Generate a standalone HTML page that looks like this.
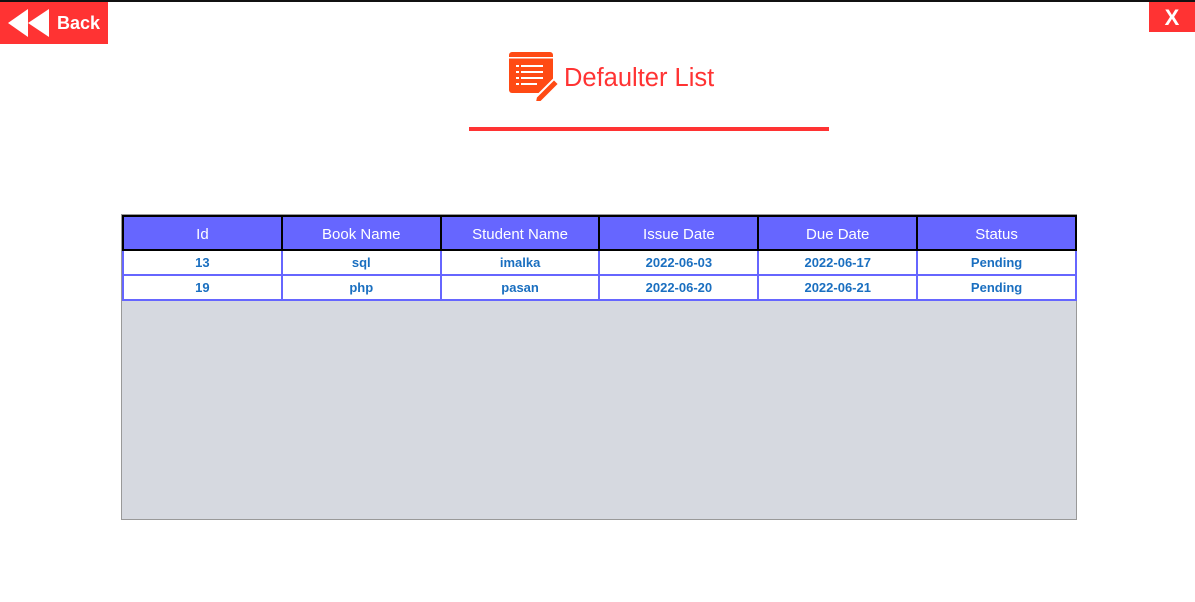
<!DOCTYPE html>
<html><head><style>
body{margin:0;width:1195px;height:602px;background:#fff;position:relative;overflow:hidden;font-family:"Liberation Sans",sans-serif}
.top{position:absolute;left:0;top:0;width:1195px;height:2px;background:#111}
.back{position:absolute;left:0;top:2px;width:108px;height:42px;background:#ff3333;color:#fff;font-weight:bold;font-size:18px}
.back span{position:absolute;left:57px;top:11px}
.x{position:absolute;left:1149px;top:2px;width:46px;height:30px;background:#ff3333;color:#fff;font-weight:bold;font-size:22px;text-align:center;line-height:31px}
.title{position:absolute;left:564px;top:64px;color:#ff3333;font-size:25.5px}
.line{position:absolute;left:469px;top:127px;width:360px;height:4px;background:#ff3333}
.grid{position:absolute;left:121px;top:214px;width:954px;height:304px;background:#d6d9e0;border:1px solid #999}
table{border-collapse:collapse;position:absolute;left:0;top:0;table-layout:fixed;width:955px}
th{background:#6666ff;color:#fff;font-weight:normal;font-size:15px;border:2px solid #000;padding:0;padding-top:2px}
td{background:#fff;color:#1a6fc0;font-weight:bold;font-size:13px;text-align:center;border:2px solid #6666ff;padding:0}
tr.h{height:34px}
tr.r{height:25px}
</style></head><body>
<div class="top"></div>
<div class="back"><svg width="50" height="42" style="position:absolute;left:6px;top:0"><polygon points="2,21 22,7 22,35" fill="#fff"/><polygon points="22,21 43,7 43,35" fill="#fff"/></svg><span>Back</span></div>
<div class="x">X</div>
<svg style="position:absolute;left:508px;top:51px" width="52" height="52">
<rect x="1" y="1" width="44" height="41" rx="3" fill="#ff4a14"/>
<rect x="1" y="6" width="44" height="1.5" fill="#fff"/>
<g fill="#fff"><rect x="8" y="14" width="3" height="2"/><rect x="13" y="14" width="22" height="2"/><rect x="8" y="20" width="3" height="2"/><rect x="13" y="20" width="22" height="2"/><rect x="8" y="26" width="3" height="2"/><rect x="13" y="26" width="22" height="2"/><rect x="8" y="32" width="3" height="2"/><rect x="13" y="32" width="16" height="2"/></g>
<path d="M28 46 L46 28 L51 33 L33 51 L27 51 Z" fill="#ff4a14" stroke="#fff" stroke-width="2"/>
</svg>
<div class="title">Defaulter List</div>
<div class="line"></div>
<div class="grid"><table>
<tr class="h"><th>Id</th><th>Book Name</th><th>Student Name</th><th>Issue Date</th><th>Due Date</th><th>Status</th></tr>
<tr class="r"><td>13</td><td>sql</td><td>imalka</td><td>2022-06-03</td><td>2022-06-17</td><td>Pending</td></tr>
<tr class="r"><td>19</td><td>php</td><td>pasan</td><td>2022-06-20</td><td>2022-06-21</td><td>Pending</td></tr>
</table></div>
</body></html>
